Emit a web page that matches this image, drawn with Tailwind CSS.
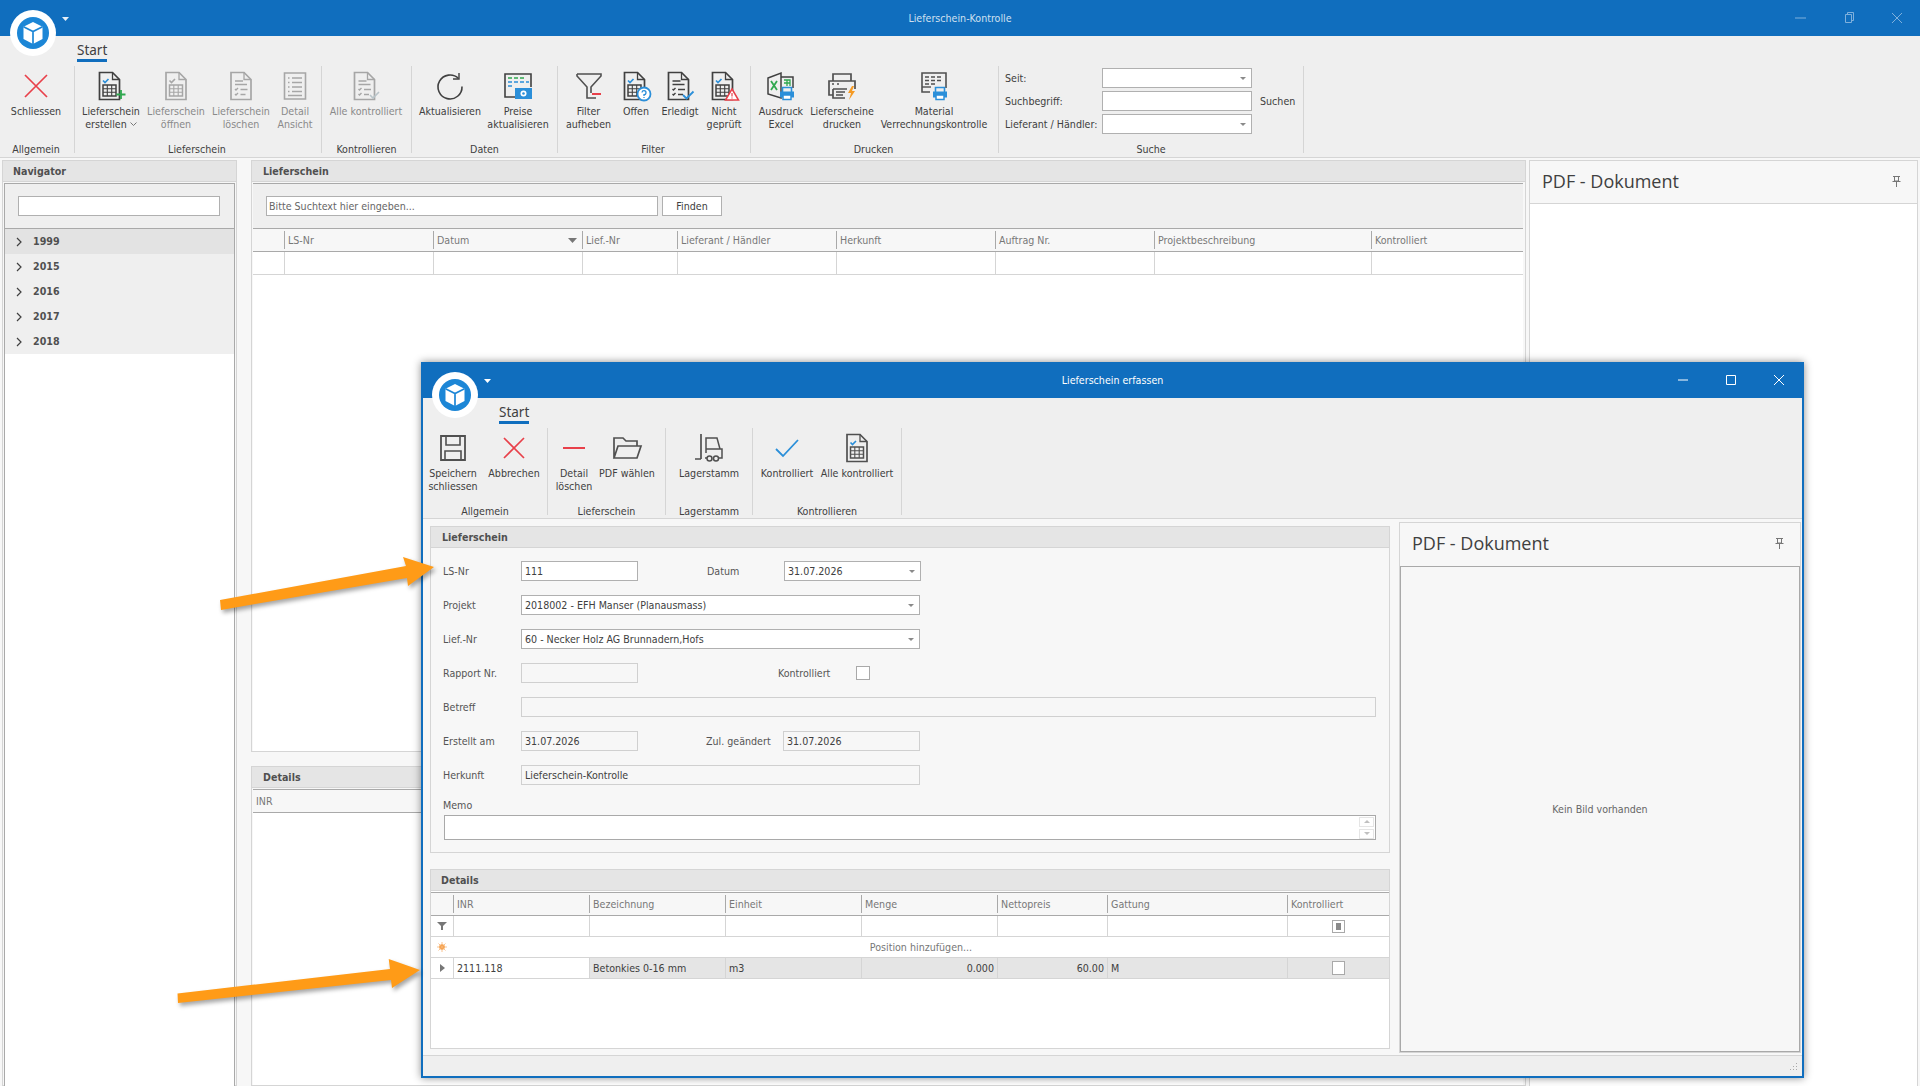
<!DOCTYPE html>
<html lang="de">
<head>
  <meta charset="UTF-8" />
  <title>Lieferschein-Kontrolle</title>
  <script src="https://cdn.jsdelivr.net/npm/@tailwindcss/browser@4"></script>
</head>
<body class="relative w-[1920px] h-[1086px] overflow-hidden bg-[#f7f7f7] text-[#404040] text-[10.6px] leading-[13px] font-['DejaVu_Sans_Condensed','Liberation_Sans',sans-serif]">

  <!-- shared icon parts -->
  <svg class="absolute w-0 h-0">
    <defs>
      <symbol id="doc" viewBox="0 0 32 32"><path d="M4.5 2.5h13l7 7v20h-20z" fill="none" stroke="currentColor" stroke-width="1.7"/><path d="M17.5 2.5v7h7" fill="none" stroke="currentColor" stroke-width="1.3"/></symbol>
      <symbol id="docgrid" viewBox="0 0 32 32"><use href="#doc"/><rect x="8" y="15" width="13" height="11" fill="none" stroke="currentColor" stroke-width="1.5"/><path d="M8 18.7h13M8 22.3h13M12.3 15v11M16.7 15v11" fill="none" stroke="currentColor" stroke-width="1.1"/></symbol>
      <symbol id="doclist" viewBox="0 0 32 32"><use href="#doc"/><path d="M8.5 11h8M8.5 14.5h12M8.5 19l1 1 2-2M14 19.5h7M8.5 24l1 1 2-2M14 24.5h5" fill="none" stroke="currentColor" stroke-width="1.4"/></symbol>
      <symbol id="bluecheck" viewBox="0 0 32 32"><path d="M8 10.5l2 2 3.5-3.5" fill="none" stroke="#2b8fd9" stroke-width="1.7"/></symbol>
      <symbol id="printer" viewBox="0 0 32 32"><path d="M16.5 22v-4.5h9V22" fill="none" stroke="#2b8fd9" stroke-width="1.6"/><rect x="14" y="21.5" width="14" height="6" fill="#2b8fd9"/><rect x="17" y="25" width="8" height="4.5" fill="#fff" stroke="#2b8fd9" stroke-width="1.5"/></symbol>
      <symbol id="logo" viewBox="0 0 46 46"><circle cx="23" cy="23" r="23" fill="#fff"/><circle cx="23" cy="23" r="16" fill="#1c86d6"/><path d="M23 12l9.5 4.7v12.2L23 34l-9.5-5.1V16.7z" fill="#fff"/><path d="M13.5 16.7L23 21.6l9.5-4.9M23 21.6V34" fill="none" stroke="#1c86d6" stroke-width="1.7"/></symbol>
    </defs>
  </svg>

  <!-- main window title -->
  <div class="h-9 bg-[#106ebe] flex items-center justify-center relative">
    <span class="text-[#cfe0f0]">Lieferschein-Kontrolle</span>
    <svg class="absolute left-[62px] top-[17px] w-[7px] h-1" viewBox="0 0 7 4"><path d="M0 0h7L3.5 4z" fill="#e6eff8"/></svg>
    <div class="absolute right-[16px] top-0 h-9 flex items-center gap-[34px] text-[#7fb0dc]">
      <svg class="w-[14px] h-[14px]" viewBox="0 0 14 14"><path d="M1 7h11" stroke="currentColor" fill="none"/></svg>
      <svg class="w-[14px] h-[14px]" viewBox="0 0 14 14"><path d="M3.5 3.5h6v8h-6zM5.5 3.5v-2h6v8h-2" stroke="currentColor" fill="none"/></svg>
      <svg class="w-[14px] h-[14px]" viewBox="0 0 14 14"><path d="M2 2l10 10M12 2L2 12" stroke="currentColor" fill="none"/></svg>
    </div>
  </div>
  <svg class="absolute left-[10px] top-[10px] w-[46px] h-[46px]"><use href="#logo"/></svg>

  <!-- main ribbon -->
  <div class="h-[122px] bg-[#efefef] border-b border-[#d5d5d5]">
    <div class="h-[30px] pl-[77px] pt-[6px]">
      <span class="inline-block h-[20px] border-b-[3px] border-[#106ebe] text-[13.5px] leading-[16px] font-['Noto_Sans',sans-serif]">Start</span>
    </div>
    <div class="flex h-[87px]">
      <div class="w-[75px] border-r border-[#d5d5d5]">
        <div class="h-[77px] flex">
          <div class="w-[72px] flex flex-col items-center pt-1 whitespace-nowrap">
            <svg class="w-8 h-8" viewBox="0 0 32 32"><path d="M5 5l22 22M27 5L5 27" stroke="#e8404a" stroke-width="1.7" fill="none"/></svg>
            <span class="mt-[3px]">Schliessen</span>
          </div>
        </div>
        <div class="w-[72px] h-[14px] text-center">Allgemein</div>
      </div>
      <div class="w-[247px] border-r border-[#d5d5d5]">
        <div class="h-[77px] flex whitespace-nowrap">
          <div class="w-[72px] flex flex-col items-center pt-1">
            <svg class="w-8 h-8 text-[#404040]" viewBox="0 0 32 32"><use href="#docgrid"/><use href="#bluecheck"/><path d="M26 20v9M21.5 24.5h9" stroke="#2fa84f" stroke-width="1.8" fill="none"/></svg>
            <span class="mt-[3px] text-center">Lieferschein<br>erstellen <svg class="inline w-[7px] h-1 align-[2px]" viewBox="0 0 7 4"><path d="M.5.5l3 3 3-3" stroke="#777" fill="none"/></svg></span>
          </div>
          <div class="w-[58px] flex flex-col items-center pt-1 text-[#8a8a8a]">
            <svg class="w-8 h-8 text-[#a6a6a6]" viewBox="-1.5 0 32 32"><use href="#docgrid"/><path d="M8 10.5l2 2 3.5-3.5" stroke="#a6a6a6" stroke-width="1.6" fill="none"/></svg>
            <span class="mt-[3px] text-center">Lieferschein<br>öffnen</span>
          </div>
          <div class="w-[72px] flex flex-col items-center pt-1 text-[#8a8a8a]">
            <svg class="w-8 h-8 text-[#a6a6a6]" viewBox="-1.5 0 32 32"><use href="#doclist"/></svg>
            <span class="mt-[3px] text-center">Lieferschein<br>löschen</span>
          </div>
          <div class="w-[36px] flex flex-col items-center pt-1 text-[#8a8a8a]">
            <svg class="w-8 h-8 text-[#a6a6a6]" viewBox="0 0 32 32"><path d="M5.5 3h21v26h-21z" fill="none" stroke="currentColor" stroke-width="1.6"/><path d="M9 8h1.5M13 8h10M9 12.500h1.5M13 12.500h10M9 17h1.5M13 17h10M9 21.500h1.5M13 21.500h10M9 25.500h14" stroke="currentColor" stroke-width="1.3" fill="none"/></svg>
            <span class="mt-[3px] text-center">Detail<br>Ansicht</span>
          </div>
        </div>
        <div class="h-[14px] pr-[2px] text-center">Lieferschein</div>
      </div>
      <div class="w-[90px] border-r border-[#d5d5d5]">
        <div class="h-[77px] flex whitespace-nowrap">
          <div class="w-[88px] flex flex-col items-center pt-1 text-[#8a8a8a]">
            <svg class="w-8 h-8 text-[#a6a6a6]" viewBox="0 0 32 32"><use href="#doclist"/><path d="M20 25l3 3 6-6" stroke="#b9c4c9" stroke-width="1.6" fill="none"/></svg>
            <span class="mt-[3px]">Alle kontrolliert</span>
          </div>
        </div>
        <div class="h-[14px] text-center">Kontrollieren</div>
      </div>
      <div class="w-[146px] border-r border-[#d5d5d5]">
        <div class="h-[77px] flex whitespace-nowrap">
          <div class="w-[76px] flex flex-col items-center pt-1">
            <svg class="w-8 h-8" viewBox="0 0 32 32"><path d="M24.5 8.5A12 12 0 1 0 28 16.5" fill="none" stroke="#404040" stroke-width="1.6"/><path d="M25 3v6h-6" fill="none" stroke="#404040" stroke-width="1.4"/></svg>
            <span class="mt-[3px]">Aktualisieren</span>
          </div>
          <div class="w-[60px] flex flex-col items-center pt-1">
            <svg class="w-8 h-8" viewBox="0 0 32 32"><path d="M15 27H3V4h26v13" fill="none" stroke="#404040" stroke-width="1.6"/><path d="M6 8h4M12 8h4M18 8h4" stroke="#2fa84f" stroke-width="1.6"/><path d="M6 12h4M12 12h4M18 12h4M24 12h3M6 16h4" stroke="#2b8fd9" stroke-width="1.4"/><rect x="13" y="18" width="17" height="11" fill="#2b8fd9"/><circle cx="21.5" cy="23.5" r="3" fill="#fff"/><circle cx="21.5" cy="23.5" r="1.3" fill="#2b8fd9"/></svg>
            <span class="mt-[3px] text-center">Preise<br>aktualisieren</span>
          </div>
        </div>
        <div class="h-[14px] text-center">Daten</div>
      </div>
      <div class="w-[193px] border-r border-[#d5d5d5]">
        <div class="h-[77px] flex whitespace-nowrap">
          <div class="w-[61px] flex flex-col items-center pt-1">
            <svg class="w-8 h-8" viewBox="0 0 32 32"><path d="M4 4h24v2L18 17v6M4 4v2l10 11v11h9" fill="none" stroke="#505050" stroke-width="1.6"/><path d="M19 24h9" stroke="#e8404a" stroke-width="2"/></svg>
            <span class="mt-[3px] text-center">Filter<br>aufheben</span>
          </div>
          <div class="w-[34px] flex flex-col items-center pt-1">
            <svg class="w-8 h-8 text-[#404040]" viewBox="0 0 32 32"><use href="#docgrid"/><use href="#bluecheck"/><circle cx="24" cy="24" r="6.5" fill="#fff" stroke="#2b8fd9" stroke-width="1.8"/><path d="M22 22.5a2 2 0 1 1 2 2.2v1.3M24 27v1" fill="none" stroke="#2b8fd9" stroke-width="1.3"/></svg>
            <span class="mt-[3px]">Offen</span>
          </div>
          <div class="w-[54px] flex flex-col items-center pt-1">
            <svg class="w-8 h-8 text-[#404040]" viewBox="0 0 32 32"><use href="#doclist"/><path d="M19 25l3.5 3.5 7-7" stroke="#2b8fd9" stroke-width="1.8" fill="none"/></svg>
            <span class="mt-[3px]">Erledigt</span>
          </div>
          <div class="w-[34px] flex flex-col items-center pt-1">
            <svg class="w-8 h-8 text-[#404040]" viewBox="0 0 32 32"><use href="#docgrid"/><use href="#bluecheck"/><path d="M24 19l6.5 11h-13z" fill="#fff" stroke="#e8404a" stroke-width="1.5"/><path d="M24 23v3.500M24 27.500v1" stroke="#e8404a" stroke-width="1.2"/></svg>
            <span class="mt-[3px] text-center">Nicht<br>geprüft</span>
          </div>
        </div>
        <div class="h-[14px] pr-[2px] text-center">Filter</div>
      </div>
      <div class="w-[248px] border-r border-[#d5d5d5]">
        <div class="h-[77px] flex whitespace-nowrap">
          <div class="w-[60px] flex flex-col items-center pt-1">
            <svg class="w-8 h-8" viewBox="0 0 32 32"><path d="M3 8l13-5v25L3 24z" fill="none" stroke="#404040" stroke-width="1.5"/><path d="M16 7h12v11" fill="none" stroke="#404040" stroke-width="1.5"/><path d="M6 11l6 9M12 11l-6 9" stroke="#2fa84f" stroke-width="1.8"/><path d="M19 10h6v6M19 13h6M22 10v6" stroke="#2fa84f" stroke-width="1.3" fill="none"/><use href="#printer" x="1"/></svg>
            <span class="mt-[3px] text-center">Ausdruck<br>Excel</span>
          </div>
          <div class="w-[62px] flex flex-col items-center pt-1">
            <svg class="w-8 h-8" viewBox="0 0 32 32"><path d="M7 11V4h18v7M7 25H3V11h26v8M7 19h14M7 19v9h12" fill="none" stroke="#505050" stroke-width="1.7"/><path d="M6 14h2M11 14h2M10 22h9M10 25h7" stroke="#505050" stroke-width="1.3"/><path d="M26 16l-4 7h3l-2 7 6-9h-3l2-5z" fill="#f59a23"/></svg>
            <span class="mt-[3px] text-center">Lieferscheine<br>drucken</span>
          </div>
          <div class="w-[122px] flex flex-col items-center pt-1">
            <svg class="w-8 h-8" viewBox="0 0 32 32"><path d="M12 22H4V3h24v15" fill="none" stroke="#505050" stroke-width="1.6"/><path d="M4 17h9" stroke="#505050" stroke-width="1.4"/><path d="M7 7h4M13 7h4M19 7h4M7 10.500h4M13 10.500h4M19 10.500h4M7 14h4M13 14h4" stroke="#505050" stroke-width="1.3"/><use href="#printer" x="1"/></svg>
            <span class="mt-[3px] text-center">Material<br>Verrechnungskontrolle</span>
          </div>
        </div>
        <div class="h-[14px] pr-[2px] text-center">Drucken</div>
      </div>
      <div class="w-[305px] border-r border-[#d5d5d5]">
        <div class="h-[77px] pl-[6px] pt-[2px] flex flex-col gap-[3px] whitespace-nowrap">
          <div class="flex items-center h-5"><span class="w-[97px]">Seit:</span>
            <div class="w-[150px] h-5 bg-white border border-[#b0b0b0] flex items-center justify-end pr-[5px]"><svg class="w-[6px] h-[3px]" viewBox="0 0 6 3"><path d="M0 0h6L3 3z" fill="#8a8a8a"/></svg></div>
          </div>
          <div class="flex items-center h-5"><span class="w-[97px]">Suchbegriff:</span>
            <div class="w-[150px] h-5 bg-white border border-[#b0b0b0]"></div>
            <span class="ml-2">Suchen</span>
          </div>
          <div class="flex items-center h-5"><span class="w-[97px]">Lieferant / Händler:</span>
            <div class="w-[150px] h-5 bg-white border border-[#b0b0b0] flex items-center justify-end pr-[5px]"><svg class="w-[6px] h-[3px]" viewBox="0 0 6 3"><path d="M0 0h6L3 3z" fill="#8a8a8a"/></svg></div>
          </div>
        </div>
        <div class="h-[14px] text-center">Suche</div>
      </div>
    </div>
  </div>

  <!-- main content -->
  <div class="h-[928px] pt-[2px] pl-[2px] flex">
    <div class="w-[235px] h-full bg-[#f7f7f7] border border-[#d5d5d5]">
      <div class="h-[21px] bg-[#e5e5e5] border-b border-[#d5d5d5] pl-[10px] flex items-center font-bold text-[#505050]">Navigator</div>
      <div class="mt-[1px] mx-[1px] h-[904px] bg-white border-x border-t border-[#a9a9a9]">
        <div class="h-[45px] bg-[#efefef] border-b border-[#a9a9a9] pl-[13px] pt-[12px]">
          <div class="w-[202px] h-5 bg-white border border-[#b0b0b0]"></div>
        </div>
        <div class="bg-[#efefef] font-bold text-[#505050]">
          <div class="h-[25px] bg-[#e3e3e3] flex items-center pl-[10px]"><svg class="w-[8px] h-[10px] mr-[10px]" viewBox="0 0 8 10"><path d="M2 1l4 4-4 4" stroke="#404040" stroke-width="1.2" fill="none"/></svg>1999</div>
          <div class="h-[25px] flex items-center pl-[10px]"><svg class="w-[8px] h-[10px] mr-[10px]" viewBox="0 0 8 10"><path d="M2 1l4 4-4 4" stroke="#404040" stroke-width="1.2" fill="none"/></svg>2015</div>
          <div class="h-[25px] flex items-center pl-[10px]"><svg class="w-[8px] h-[10px] mr-[10px]" viewBox="0 0 8 10"><path d="M2 1l4 4-4 4" stroke="#404040" stroke-width="1.2" fill="none"/></svg>2016</div>
          <div class="h-[25px] flex items-center pl-[10px]"><svg class="w-[8px] h-[10px] mr-[10px]" viewBox="0 0 8 10"><path d="M2 1l4 4-4 4" stroke="#404040" stroke-width="1.2" fill="none"/></svg>2017</div>
          <div class="h-[25px] flex items-center pl-[10px]"><svg class="w-[8px] h-[10px] mr-[10px]" viewBox="0 0 8 10"><path d="M2 1l4 4-4 4" stroke="#404040" stroke-width="1.2" fill="none"/></svg>2018</div>
        </div>
      </div>
    </div>

    <div class="w-[1275px] ml-[14px] h-full flex flex-col gap-[14px]">
      <div class="h-[593px] border border-[#d5d5d5]">
        <div class="h-[21px] bg-[#e5e5e5] border-b border-[#d5d5d5] pl-[11px] flex items-center font-bold text-[#505050]">Lieferschein</div>
        <div class="mt-[1px] ml-[1px] mr-[2px] h-[568px] bg-white border-t border-[#a9a9a9]">
          <div class="h-[45px] bg-[#efefef] border-b border-[#a9a9a9] pl-[13px] pt-[12px] flex gap-1">
            <div class="w-[392px] h-5 bg-white border border-[#b0b0b0] pl-[2px] leading-[19px] text-[#666]">Bitte Suchtext hier eingeben...</div>
            <div class="w-[60px] h-5 bg-white border border-[#b0b0b0] text-center leading-[19px]">Finden</div>
          </div>
          <div class="h-[23px] bg-[#f7f7f7] border-b border-[#a9a9a9] grid grid-cols-[31px_149px_149px_95px_159px_159px_159px_217px_1fr] items-center text-[#777]">
            <div></div>
            <div class="h-[18px] border-l border-[#a9a9a9] pl-[3px] leading-[19px]">LS-Nr</div>
            <div class="h-[18px] border-l border-[#a9a9a9] pl-[3px] leading-[19px] relative">Datum<svg class="absolute right-[5px] top-[7px] w-[9px] h-[5px]" viewBox="0 0 9 5"><path d="M0 0h9L4.5 5z" fill="#777"/></svg></div>
            <div class="h-[18px] border-l border-[#a9a9a9] pl-[3px] leading-[19px]">Lief.-Nr</div>
            <div class="h-[18px] border-l border-[#a9a9a9] pl-[3px] leading-[19px]">Lieferant / Händler</div>
            <div class="h-[18px] border-l border-[#a9a9a9] pl-[3px] leading-[19px]">Herkunft</div>
            <div class="h-[18px] border-l border-[#a9a9a9] pl-[3px] leading-[19px]">Auftrag Nr.</div>
            <div class="h-[18px] border-l border-[#a9a9a9] pl-[3px] leading-[19px]">Projektbeschreibung</div>
            <div class="h-[18px] border-l border-[#a9a9a9] pl-[3px] leading-[19px]">Kontrolliert</div>
          </div>
          <div class="h-[23px] border-b border-[#d5d5d5] grid grid-cols-[31px_149px_149px_95px_159px_159px_159px_217px_1fr]">
            <div></div>
            <div class="border-l border-[#d5d5d5]"></div>
            <div class="border-l border-[#d5d5d5]"></div>
            <div class="border-l border-[#d5d5d5]"></div>
            <div class="border-l border-[#d5d5d5]"></div>
            <div class="border-l border-[#d5d5d5]"></div>
            <div class="border-l border-[#d5d5d5]"></div>
            <div class="border-l border-[#d5d5d5]"></div>
            <div class="border-l border-[#d5d5d5]"></div>
          </div>
        </div>
      </div>
      <div class="flex-1 border border-[#d5d5d5]">
        <div class="h-[21px] bg-[#e5e5e5] border-b border-[#d5d5d5] pl-[11px] flex items-center font-bold text-[#505050]">Details</div>
        <div class="mt-[1px] ml-[1px] mr-[2px] h-[296px] bg-white border-t border-[#a9a9a9]">
          <div class="h-[23px] bg-[#f7f7f7] border-b border-[#a9a9a9] pl-[3px] leading-[23px] text-[#777]">INR</div>
        </div>
      </div>
    </div>

    <div class="w-[389px] ml-[3px] h-full border border-[#d5d5d5] bg-[#f7f7f7]">
      <div class="h-[43px] border-b border-[#d5d5d5] pl-3 pr-4 pb-[2px] flex items-center justify-between">
        <span class="text-[18px] leading-[22px] font-['Open_Sans',sans-serif] text-[#404040]">PDF - Dokument</span>
        <svg class="w-[9px] h-[11px]" viewBox="0 0 9 11"><path d="M1 .5h7M2.5 .5v4.500h4V.5M.5 5.500h8M4.500 5.500V11" stroke="#777" fill="none"/></svg>
      </div>
      <div class="h-[883px] bg-white"></div>
    </div>
  </div>

  <!-- floating dialog -->
  <div class="absolute left-[421px] top-[362px] w-[1383px] h-[716px] border-2 border-t-0 border-[#106ebe] bg-[#f7f7f7] shadow-[0_0_8px_rgba(0,0,0,0.45)]">
    <div class="h-9 bg-[#106ebe] flex items-center justify-center relative -mx-[2px]">
      <span class="text-white">Lieferschein erfassen</span>
      <svg class="absolute left-[63px] top-[17px] w-[7px] h-1" viewBox="0 0 7 4"><path d="M0 0h7L3.5 4z" fill="#fff"/></svg>
      <div class="absolute right-[18px] top-0 h-9 flex items-center gap-[34px] text-white">
        <svg class="w-[14px] h-[14px]" viewBox="0 0 14 14"><path d="M2 7h10" stroke="currentColor" fill="none"/></svg>
        <svg class="w-[14px] h-[14px]" viewBox="0 0 14 14"><path d="M2.5 2.5h9v9h-9z" stroke="currentColor" fill="none"/></svg>
        <svg class="w-[14px] h-[14px]" viewBox="0 0 14 14"><path d="M2 2l10 10M12 2L2 12" stroke="currentColor" fill="none"/></svg>
      </div>
    </div>
    <svg class="absolute left-[9px] top-[10px] w-[46px] h-[46px]"><use href="#logo"/></svg>

    <div class="h-[121px] bg-[#efefef] border-b border-[#d5d5d5]">
      <div class="h-[30px] pl-[76px] pt-[6px]">
        <span class="inline-block h-[20px] border-b-[3px] border-[#106ebe] text-[13.5px] leading-[16px] font-['Noto_Sans',sans-serif]">Start</span>
      </div>
      <div class="flex h-[87px] whitespace-nowrap">
        <div class="w-[125px] border-r border-[#d5d5d5]">
          <div class="h-[77px] flex">
            <div class="w-[60px] flex flex-col items-center pt-1">
              <svg class="w-8 h-8" viewBox="0 0 32 32"><path d="M4 4h24v24H4z" fill="none" stroke="#505050" stroke-width="1.8"/><path d="M9 4v9h14V4M8 28v-9h16v9" fill="none" stroke="#505050" stroke-width="1.6"/></svg>
              <span class="mt-[3px] text-center">Speichern<br>schliessen</span>
            </div>
            <div class="w-[62px] flex flex-col items-center pt-1">
              <svg class="w-8 h-8" viewBox="0 0 32 32"><path d="M6 6l20 20M26 6L6 26" stroke="#e8404a" stroke-width="1.7" fill="none"/></svg>
              <span class="mt-[3px]">Abbrechen</span>
            </div>
          </div>
          <div class="h-[14px] text-center">Allgemein</div>
        </div>
        <div class="w-[118px] border-r border-[#d5d5d5]">
          <div class="h-[77px] flex pl-[1px]">
            <div class="w-[50px] flex flex-col items-center pt-1">
              <svg class="w-8 h-8" viewBox="0 0 32 32"><path d="M5 16h22" stroke="#e8404a" stroke-width="2"/></svg>
              <span class="mt-[3px] text-center">Detail<br>löschen</span>
            </div>
            <div class="w-[56px] flex flex-col items-center pt-1">
              <svg class="w-8 h-8" viewBox="0 0 32 32"><path d="M3 26V6h9l3 3h11v5M3 26l4-12h23l-4 12z" fill="none" stroke="#505050" stroke-width="1.7"/></svg>
              <span class="mt-[3px]">PDF wählen</span>
            </div>
          </div>
          <div class="h-[14px] text-center">Lieferschein</div>
        </div>
        <div class="w-[87px] border-r border-[#d5d5d5]">
          <div class="h-[77px] flex">
            <div class="w-[86px] flex flex-col items-center pt-1">
              <svg class="w-8 h-8" viewBox="0 0 32 32"><path d="M8 2v25M8 27H2" fill="none" stroke="#505050" stroke-width="1.7"/><path d="M13 21V6h11l3 11h2v9h-4M14 26h-2M19 26h-1M13 17h14" fill="none" stroke="#505050" stroke-width="1.5"/><circle cx="16.5" cy="26.5" r="2.5" fill="none" stroke="#505050" stroke-width="1.5"/><circle cx="23" cy="26.5" r="2.5" fill="none" stroke="#505050" stroke-width="1.5"/></svg>
              <span class="mt-[3px]">Lagerstamm</span>
            </div>
          </div>
          <div class="h-[14px] text-center">Lagerstamm</div>
        </div>
        <div class="w-[149px] border-r border-[#d5d5d5]">
          <div class="h-[77px] flex">
            <div class="w-[68px] flex flex-col items-center pt-1">
              <svg class="w-8 h-8" viewBox="0 0 32 32"><path d="M5 17l7 7L27 8" fill="none" stroke="#2b8fd9" stroke-width="1.8"/></svg>
              <span class="mt-[3px]">Kontrolliert</span>
            </div>
            <div class="w-[72px] flex flex-col items-center pt-1">
              <svg class="w-8 h-8 text-[#505050]" viewBox="-1.5 0 32 32"><use href="#docgrid"/><use href="#bluecheck"/></svg>
              <span class="mt-[3px]">Alle kontrolliert</span>
            </div>
          </div>
          <div class="h-[14px] text-center">Kontrollieren</div>
        </div>
      </div>
    </div>

    <div class="h-[536px] pl-[7px] flex">
      <div class="w-[960px] pt-[7px] flex flex-col gap-[16px]">
        <div class="h-[327px] border border-[#d5d5d5]">
          <div class="h-[21px] bg-[#e5e5e5] border-b border-[#d5d5d5] pl-[11px] flex items-center font-bold text-[#505050]">Lieferschein</div>
          <div class="pl-3 pt-[13px] flex flex-col gap-[14px] text-[#555]">
            <div class="flex items-center h-5">
              <span class="w-[78px]">LS-Nr</span>
              <div class="w-[117px] h-5 bg-white border border-[#b0b0b0] pl-[3px] leading-[18px] text-[#404040]">111</div>
              <span class="w-[77px] ml-[69px]">Datum</span>
              <div class="w-[137px] h-5 bg-white border border-[#b0b0b0] pl-[3px] flex items-center justify-between pr-[5px] text-[#404040]">31.07.2026<svg class="w-[6px] h-[3px]" viewBox="0 0 6 3"><path d="M0 0h6L3 3z" fill="#8a8a8a"/></svg></div>
            </div>
            <div class="flex items-center h-5">
              <span class="w-[78px]">Projekt</span>
              <div class="w-[399px] h-5 bg-white border border-[#b0b0b0] pl-[3px] flex items-center justify-between pr-[5px] text-[#404040]">2018002 - EFH Manser (Planausmass)<svg class="w-[6px] h-[3px]" viewBox="0 0 6 3"><path d="M0 0h6L3 3z" fill="#8a8a8a"/></svg></div>
            </div>
            <div class="flex items-center h-5">
              <span class="w-[78px]">Lief.-Nr</span>
              <div class="w-[399px] h-5 bg-white border border-[#b0b0b0] pl-[3px] flex items-center justify-between pr-[5px] text-[#404040]">60 - Necker Holz AG Brunnadern,Hofs<svg class="w-[6px] h-[3px]" viewBox="0 0 6 3"><path d="M0 0h6L3 3z" fill="#8a8a8a"/></svg></div>
            </div>
            <div class="flex items-center h-5">
              <span class="w-[78px]">Rapport Nr.</span>
              <div class="w-[117px] h-5 border border-[#d0d0d0]"></div>
              <span class="w-[78px] ml-[140px]">Kontrolliert</span>
              <div class="w-[14px] h-[14px] bg-white border border-[#a9a9a9]"></div>
            </div>
            <div class="flex items-center h-5">
              <span class="w-[78px]">Betreff</span>
              <div class="w-[855px] h-5 border border-[#d0d0d0]"></div>
            </div>
            <div class="flex items-center h-5">
              <span class="w-[78px]">Erstellt am</span>
              <div class="w-[117px] h-5 border border-[#d0d0d0] pl-[3px] leading-[18px] text-[#404040]">31.07.2026</div>
              <span class="w-[77px] ml-[68px]">Zul. geändert</span>
              <div class="w-[137px] h-5 border border-[#d0d0d0] pl-[3px] leading-[18px] text-[#404040]">31.07.2026</div>
            </div>
            <div class="flex items-center h-5">
              <span class="w-[78px]">Herkunft</span>
              <div class="w-[399px] h-5 border border-[#d0d0d0] pl-[3px] leading-[18px] text-[#404040]">Lieferschein-Kontrolle</div>
            </div>
            <div>
              <div class="h-[13px]">Memo</div>
              <div class="ml-[1px] mt-[3px] w-[932px] h-[25px] bg-white border border-[#a9a9a9] flex justify-end items-center pr-[1px]">
                <div class="w-[15px] flex flex-col gap-[2px]">
                  <div class="h-[10px] border border-[#e5e5e5] flex items-center justify-center"><svg class="w-[6px] h-[3px]" viewBox="0 0 6 3"><path d="M0 3h6L3 0z" fill="#c0c0c0"/></svg></div>
                  <div class="h-[10px] border border-[#e5e5e5] flex items-center justify-center"><svg class="w-[6px] h-[3px]" viewBox="0 0 6 3"><path d="M0 0h6L3 3z" fill="#c0c0c0"/></svg></div>
                </div>
              </div>
            </div>
          </div>
        </div>
        <div class="h-[180px] border border-[#d5d5d5] bg-white">
          <div class="h-[21px] bg-[#e5e5e5] border-b border-[#d5d5d5] pl-[10px] flex items-center font-bold text-[#505050]">Details</div>
          <div class="h-[24px] mt-[1px] bg-[#f7f7f7] border-y border-[#a9a9a9] grid grid-cols-[22px_136px_136px_136px_136px_110px_180px_1fr] items-center text-[#777]">
            <div></div>
            <div class="h-[18px] border-l border-[#a9a9a9] pl-[3px] leading-[19px]">INR</div>
            <div class="h-[18px] border-l border-[#a9a9a9] pl-[3px] leading-[19px]">Bezeichnung</div>
            <div class="h-[18px] border-l border-[#a9a9a9] pl-[3px] leading-[19px]">Einheit</div>
            <div class="h-[18px] border-l border-[#a9a9a9] pl-[3px] leading-[19px]">Menge</div>
            <div class="h-[18px] border-l border-[#a9a9a9] pl-[3px] leading-[19px]">Nettopreis</div>
            <div class="h-[18px] border-l border-[#a9a9a9] pl-[3px] leading-[19px]">Gattung</div>
            <div class="h-[18px] border-l border-[#a9a9a9] pl-[3px] leading-[19px]">Kontrolliert</div>
          </div>
          <div class="h-[21px] border-b border-[#d5d5d5] grid grid-cols-[22px_136px_136px_136px_136px_110px_180px_1fr]">
            <div class="flex items-center justify-center"><svg class="w-[10px] h-[10px]" viewBox="0 0 10 10"><path d="M0 1h10L6 5v4H4V5z" fill="#777"/></svg></div>
            <div class="border-l border-[#d5d5d5]"></div>
            <div class="border-l border-[#d5d5d5]"></div>
            <div class="border-l border-[#d5d5d5]"></div>
            <div class="border-l border-[#d5d5d5]"></div>
            <div class="border-l border-[#d5d5d5]"></div>
            <div class="border-l border-[#d5d5d5]"></div>
            <div class="border-l border-[#d5d5d5] flex items-center justify-center"><div class="w-[13px] h-[13px] border border-[#a9a9a9] flex items-center justify-center"><div class="w-[5px] h-[7px] bg-[#8a8a8a]"></div></div></div>
          </div>
          <div class="h-[21px] border-b border-[#d5d5d5] flex">
            <div class="w-[22px] flex items-center justify-center"><svg class="w-[10px] h-[10px]" viewBox="0 0 10 10"><circle cx="5" cy="5" r="2.8" fill="#f59a3c"/><path d="M5 0v10M0 5h10M1.5 1.5l7 7M8.5 1.5l-7 7" stroke="#f8b475" stroke-width=".8"/></svg></div>
            <div class="flex-1 text-center leading-[21px] text-[#777]">Position hinzufügen...</div>
          </div>
          <div class="h-[21px] border-b border-[#d5d5d5] grid grid-cols-[22px_136px_136px_136px_136px_110px_180px_1fr] items-stretch leading-[20px]">
            <div class="flex items-center justify-center"><svg class="w-[5px] h-[8px]" viewBox="0 0 5 8"><path d="M0 0l5 4-5 4z" fill="#777"/></svg></div>
            <div class="border-l border-[#d5d5d5] pl-[3px]">2111.118</div>
            <div class="bg-[#e5e5e5] border-l border-[#d5d5d5] pl-[3px]">Betonkies 0-16 mm</div>
            <div class="bg-[#e5e5e5] border-l border-[#d5d5d5] pl-[3px]">m3</div>
            <div class="bg-[#e5e5e5] border-l border-[#d5d5d5] pr-[3px] text-right">0.000</div>
            <div class="bg-[#e5e5e5] border-l border-[#d5d5d5] pr-[3px] text-right">60.00</div>
            <div class="bg-[#e5e5e5] border-l border-[#d5d5d5] pl-[3px]">M</div>
            <div class="bg-[#e5e5e5] border-l border-[#d5d5d5] flex items-center justify-center"><div class="w-[13px] h-[14px] bg-white border border-[#a9a9a9]"></div></div>
          </div>
        </div>
      </div>
      <div class="w-[402px] ml-[9px] mt-[3px] h-[531px] border border-[#d5d5d5]">
        <div class="h-[43px] pl-3 pr-4 pb-[3px] flex items-center justify-between">
          <span class="text-[18px] leading-[22px] font-['Open_Sans',sans-serif] text-[#404040]">PDF - Dokument</span>
          <svg class="w-[9px] h-[11px]" viewBox="0 0 9 11"><path d="M1 .5h7M2.5 .5v4.500h4V.5M.5 5.500h8M4.500 5.500V11" stroke="#777" fill="none"/></svg>
        </div>
        <div class="h-[486px] border border-[#a9a9a9] flex items-center justify-center text-[#666]">Kein Bild vorhanden</div>
      </div>
    </div>

    <div class="h-[21px] bg-[#efefef] border-t border-[#d5d5d5] flex justify-end items-end pr-1 pb-1">
      <svg class="w-[10px] h-[10px]" viewBox="0 0 10 10"><path d="M8 1h1v1H8zM5 4h1v1H5zM8 4h1v1H8zM2 7h1v1H2zM5 7h1v1H5zM8 7h1v1H8z" fill="#a9a9a9"/></svg>
    </div>
  </div>

  <!-- callout arrows -->
  <svg class="absolute left-0 top-0 w-[1920px] h-[1086px] pointer-events-none drop-shadow-[2px_3px_2px_rgba(0,0,0,0.35)]" viewBox="0 0 1920 1086">
    <path d="M220 600L406 566 403 557 434 567 408 586 407 578 221 610z" fill="#ff9b17"/>
    <path d="M177.5 993.5L390 969 388.7 959 420 970 392 988 391 980 178 1003z" fill="#ff9b17"/>
  </svg>
</body>
</html>
